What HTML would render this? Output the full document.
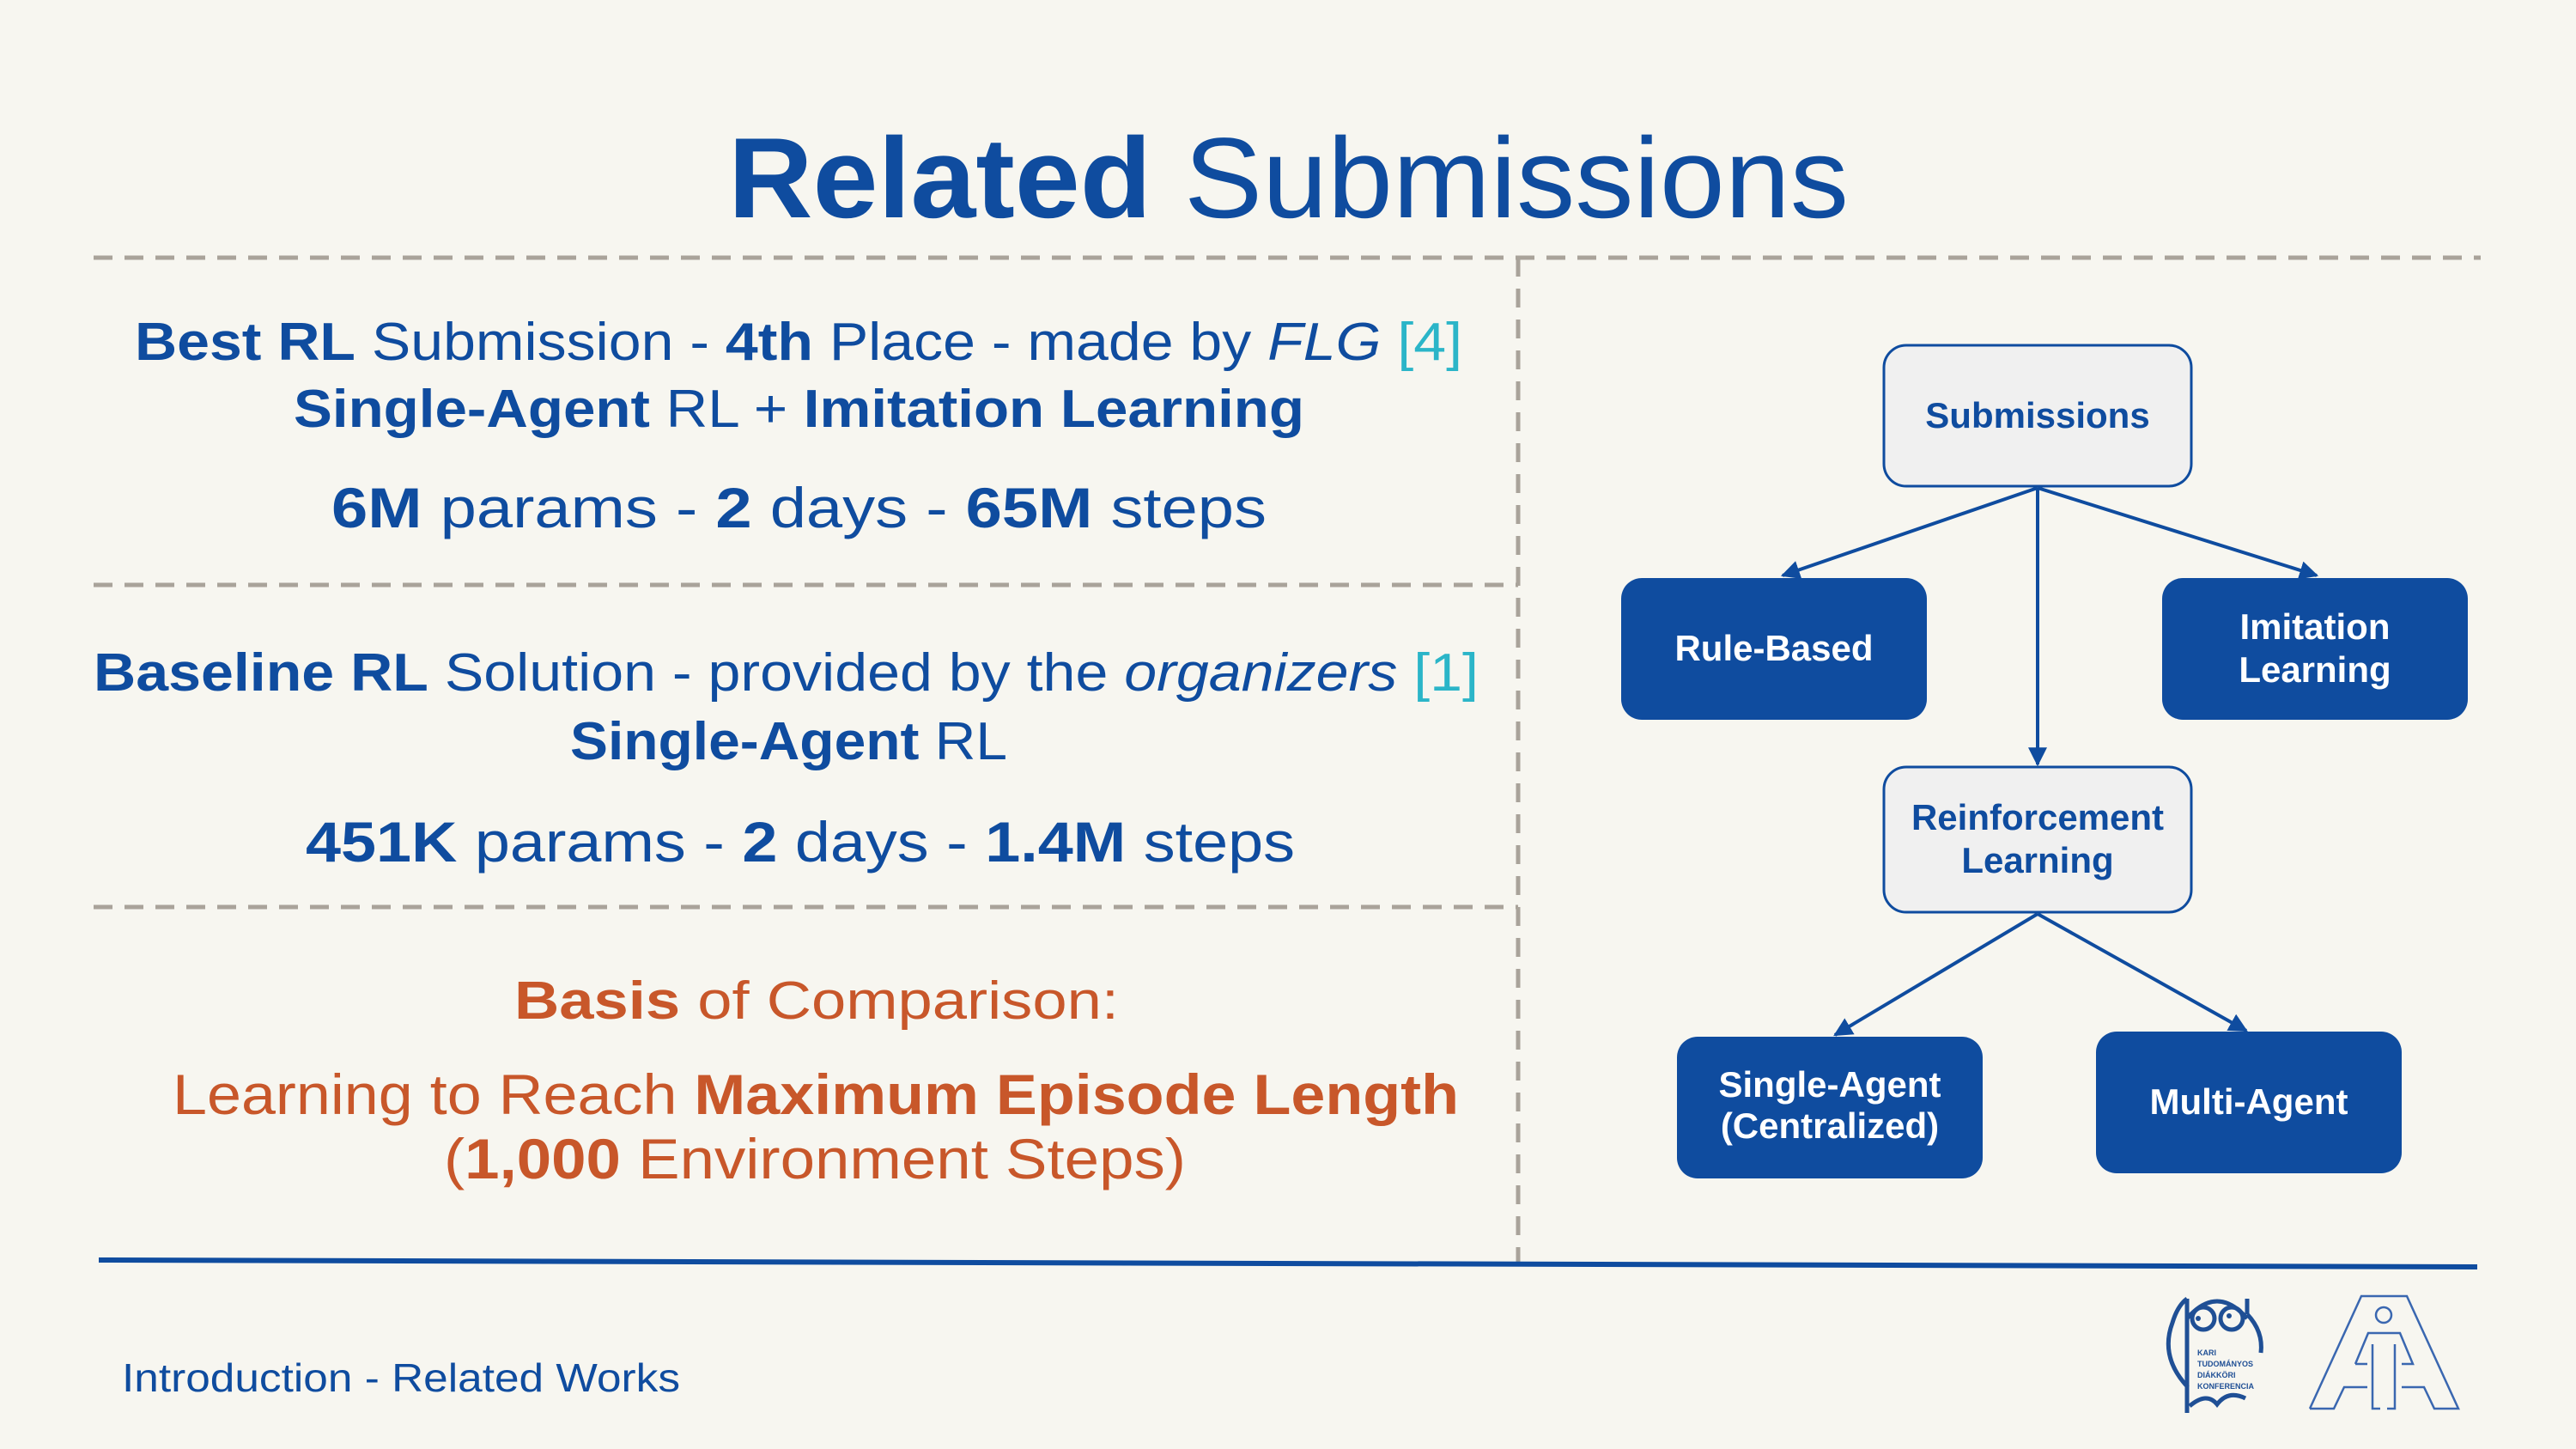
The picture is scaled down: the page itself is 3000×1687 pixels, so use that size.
<!DOCTYPE html>
<html><head><meta charset="utf-8"><style>
html,body{margin:0;padding:0;background:#f7f6f0;}
svg{display:block}
text{font-family:"Liberation Sans",sans-serif;}
.b{font-weight:bold}
</style></head><body>
<svg width="3000" height="1687" viewBox="0 0 3000 1687" xmlns="http://www.w3.org/2000/svg">
<rect width="3000" height="1687" fill="#f7f6f0"/>
<defs>
<marker id="a2" viewBox="0 0 10 10" markerWidth="22" markerHeight="22" refX="9" refY="5" orient="auto" markerUnits="userSpaceOnUse"><path d="M0,0 L10,5 L0,10 z" fill="#0f4c9f"/></marker></defs>

<text x="848" y="253" font-size="133" fill="#0f4c9f" textLength="1305" lengthAdjust="spacingAndGlyphs"><tspan class="b">Related</tspan> Submissions</text>

<g stroke="#a9a39a" stroke-width="5" stroke-dasharray="22 14" fill="none">
<line x1="109" y1="300" x2="2889" y2="300"/>
<line x1="1768" y1="300" x2="1768" y2="1469"/>
<line x1="109" y1="681" x2="1768" y2="681"/>
<line x1="109" y1="1056" x2="1768" y2="1056"/>
</g>
<line x1="115" y1="1467" x2="2885" y2="1475" stroke="#0f4c9f" stroke-width="6"/>

<g fill="#0f4c9f">
<text x="157" y="419" font-size="62" textLength="1546" lengthAdjust="spacingAndGlyphs"><tspan class="b">Best RL</tspan> Submission - <tspan class="b">4th</tspan> Place - made by <tspan font-style="italic">FLG</tspan> <tspan fill="#2bb5c8">[4]</tspan></text>
<text x="342" y="497" font-size="62" textLength="1177" lengthAdjust="spacingAndGlyphs"><tspan class="b">Single-Agent</tspan> RL + <tspan class="b">Imitation Learning</tspan></text>
<text x="386" y="614" font-size="66" textLength="1089" lengthAdjust="spacingAndGlyphs"><tspan class="b">6M</tspan> params - <tspan class="b">2</tspan> days - <tspan class="b">65M</tspan> steps</text>
<text x="109" y="804" font-size="62" textLength="1613" lengthAdjust="spacingAndGlyphs"><tspan class="b">Baseline RL</tspan> Solution - provided by the <tspan font-style="italic">organizers</tspan> <tspan fill="#2bb5c8">[1]</tspan></text>
<text x="664" y="884" font-size="62" textLength="509" lengthAdjust="spacingAndGlyphs"><tspan class="b">Single-Agent</tspan> RL</text>
<text x="356" y="1003" font-size="66" textLength="1152" lengthAdjust="spacingAndGlyphs"><tspan class="b">451K</tspan> params - <tspan class="b">2</tspan> days - <tspan class="b">1.4M</tspan> steps</text>
</g>
<g fill="#c8572a">
<text x="599" y="1186" font-size="62" textLength="704" lengthAdjust="spacingAndGlyphs"><tspan class="b">Basis</tspan> of Comparison:</text>
<text x="201" y="1297" font-size="66" textLength="1498" lengthAdjust="spacingAndGlyphs">Learning to Reach <tspan class="b">Maximum Episode Length</tspan></text>
<text x="517" y="1372" font-size="66" textLength="864" lengthAdjust="spacingAndGlyphs">(<tspan class="b">1,000</tspan> Environment Steps)</text>
</g>
<text x="142" y="1620" font-size="46" fill="#0f4c9f" textLength="650" lengthAdjust="spacingAndGlyphs">Introduction - Related Works</text>

<g stroke="#0f4c9f" stroke-width="4" fill="none">
<line x1="2373" y1="568" x2="2076" y2="670" marker-end="url(#a2)"/>
<line x1="2373" y1="568" x2="2373" y2="890" marker-end="url(#a2)"/>
<line x1="2373" y1="568" x2="2698" y2="670" marker-end="url(#a2)"/>
<line x1="2373" y1="1064" x2="2137" y2="1205" marker-end="url(#a2)"/>
<line x1="2373" y1="1064" x2="2616" y2="1200" marker-end="url(#a2)"/>
</g>
<rect x="2194" y="402" width="358" height="164" rx="26" fill="#f0f0f0" stroke="#0f4c9f" stroke-width="3"/>
<rect x="2194" y="893" width="358" height="169" rx="26" fill="#f0f0f0" stroke="#0f4c9f" stroke-width="3"/>
<rect x="1888" y="673" width="356" height="165" rx="24" fill="#0f4c9f"/>
<rect x="2518" y="673" width="356" height="165" rx="24" fill="#0f4c9f"/>
<rect x="1953" y="1207" width="356" height="165" rx="24" fill="#0f4c9f"/>
<rect x="2441" y="1201" width="356" height="165" rx="24" fill="#0f4c9f"/>
<g font-size="42" font-weight="bold" text-anchor="middle">
<text x="2373" y="498" fill="#0f4c9f">Submissions</text>
<text x="2373" y="966" fill="#0f4c9f">Reinforcement</text>
<text x="2373" y="1016" fill="#0f4c9f">Learning</text>
<text x="2066" y="769" fill="#fff">Rule-Based</text>
<text x="2696" y="744" fill="#fff">Imitation</text>
<text x="2696" y="794" fill="#fff">Learning</text>
<text x="2131" y="1277" fill="#fff">Single-Agent</text>
<text x="2131" y="1325" fill="#fff">(Centralized)</text>
<text x="2619" y="1297" fill="#fff">Multi-Agent</text>
</g>

<g stroke="#1f4f95" fill="none" stroke-width="5">
<path d="M2547,1645 L2547,1512 M2617,1512 L2617,1530"/>
<path d="M2547,1535 Q2582,1495 2617,1535"/>
<path d="M2548,1615 Q2515,1580 2530,1540 Q2536,1520 2547,1512"/>
<path d="M2617,1530 Q2636,1550 2633,1575"/>
<circle cx="2566" cy="1535" r="13"/><circle cx="2599" cy="1535" r="13"/>
<path d="M2550,1637 Q2570,1620 2582,1635 Q2595,1618 2615,1628"/>
</g>
<circle cx="2560" cy="1535" r="3" fill="#1f4f95"/><circle cx="2596" cy="1532" r="3" fill="#1f4f95"/>
<g font-size="9" font-weight="bold" fill="#1f4f95">
<text x="2559" y="1578">KARI</text><text x="2559" y="1591">TUDOMÁNYOS</text><text x="2559" y="1604">DIÁKKÖRI</text><text x="2559" y="1617">KONFERENCIA</text>
</g>
<g stroke="#3a67b0" fill="none" stroke-width="2.5">
<path d="M2690,1640 L2750,1509 L2803,1509 L2863,1640 L2835,1640 L2823,1615 L2797,1615 M2757,1615 L2730,1615 L2718,1640 L2690,1640"/>
<path d="M2743,1588 L2758,1552 L2795,1552 L2810,1588 L2797,1588 M2757,1588 L2743,1588"/>
<path d="M2763,1565 L2763,1640 L2772,1640 M2789,1565 L2789,1640 L2780,1640"/>
<circle cx="2776" cy="1531" r="9"/>
</g>
</svg>
</body></html>
